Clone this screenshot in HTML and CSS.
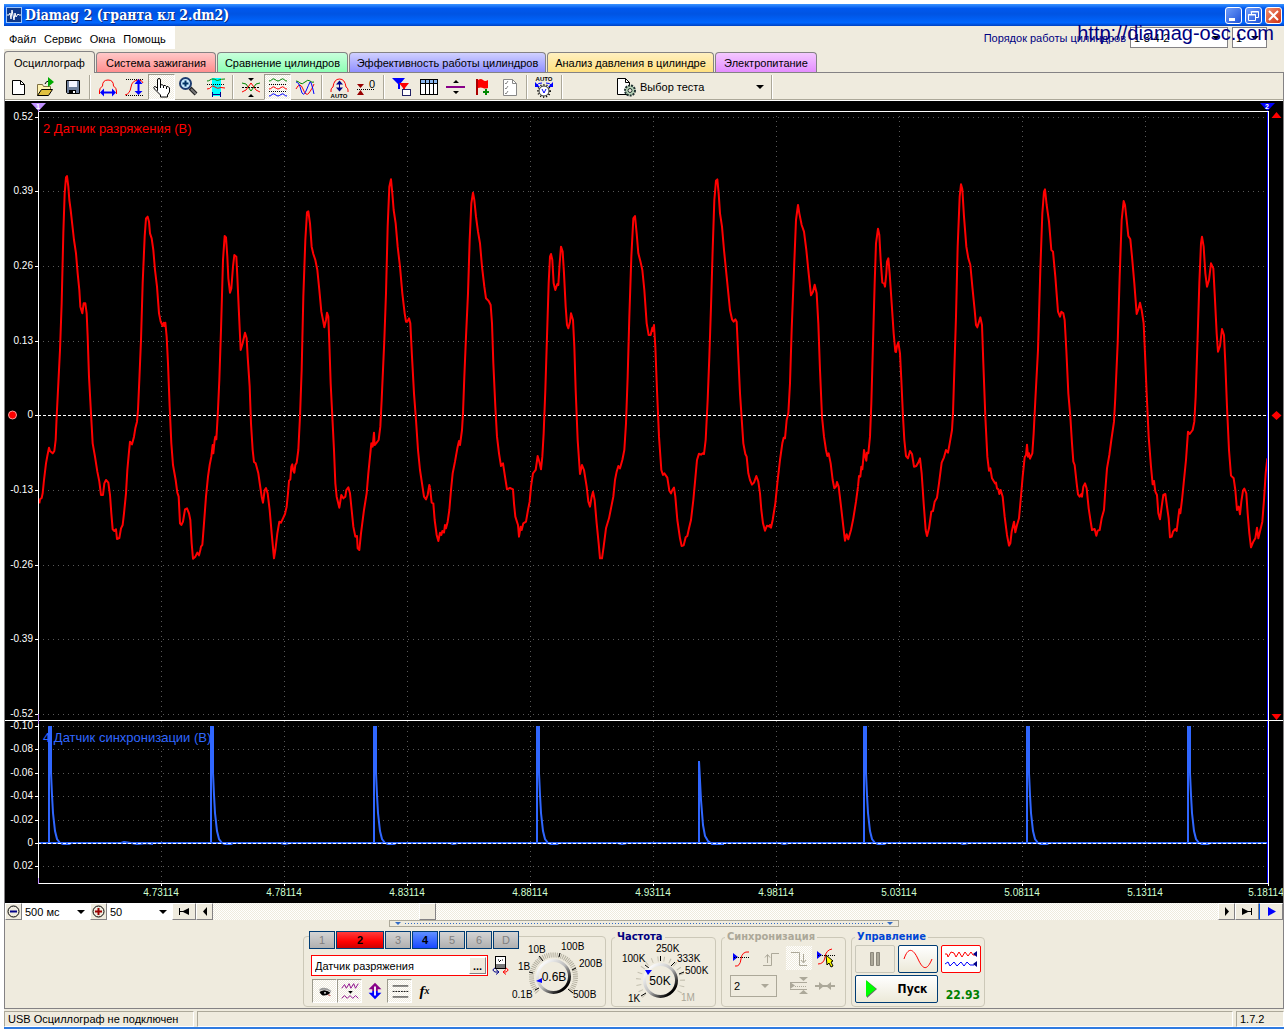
FILE: index.html
```html
<!DOCTYPE html>
<html lang="ru">
<head>
<meta charset="utf-8">
<title>Diamag 2 (гранта кл 2.dm2)</title>
<link rel="stylesheet" href="styles.css">
</head>
<body>
<div class="window">
  <header class="titlebar">
    <svg class="app-icon" width="16" height="16" viewBox="0 0 16 16"><rect x=".5" y=".5" width="15" height="15" fill="#103888" stroke="#9cc4f8"/><path d="M1 8h2l1-2 1 6 1-9 2 10 1-7 1 4 2-3 1 1h2" fill="none" stroke="#fff"/></svg>
    <h1 class="title">Diamag 2 (гранта кл 2.dm2)</h1>
    <button class="win-btn" aria-label="Свернуть"><svg width="15" height="15" viewBox="0 0 15 15"><path d="M3 10h6v3H3z" fill="#fff"/></svg></button>
    <button class="win-btn" aria-label="Восстановить"><svg width="15" height="15" viewBox="0 0 15 15"><path d="M5.500 6V3.500h7v6H10M4.500 4h8M2.500 6.500h7v6h-7zM2 7h8" fill="none" stroke="#fff"/></svg></button>
    <button class="win-btn close" aria-label="Закрыть"><svg width="15" height="15" viewBox="0 0 15 15"><path d="M3 3l9 9M12 3l-9 9" stroke="#fff" stroke-width="2"/></svg></button>
  </header>

  <div class="menurow">
    <nav class="menu">
      <button>Файл</button><button>Сервис</button><button>Окна</button><button>Помощь</button>
    </nav>
    <div class="order">
      <label for="order">Порядок работы цилиндров</label>
      <span class="combo boxed order-combo"><select id="order"><option>1-3-4-2</option></select></span>
      <span class="combo boxed cyl-combo"><select aria-label="Цилиндр"><option>1</option></select></span>
    </div>
    <a class="watermark" href="http://diamag-osc.com">http://diamag-osc.com</a>
  </div>

  <div class="tabs" role="tablist">
    <button class="tab active" role="tab">Осциллограф</button>
    <button class="tab red" role="tab">Система зажигания</button>
    <button class="tab green" role="tab">Сравнение цилиндров</button>
    <button class="tab blue" role="tab">Эффективность работы цилиндров</button>
    <button class="tab yellow" role="tab">Анализ давления в цилиндре</button>
    <button class="tab violet" role="tab">Электропитание</button>
  </div>

  <main class="page">
    <div class="toolbar">
      <button class="tool" aria-label="Новый"><svg viewBox="0 0 24 24"><path d="M5.500 5.500h8l4 4v10h-12z" fill="#fff" stroke="#000"/><path d="M13.500 5.500v4h4" fill="none" stroke="#000"/></svg></button>
      <button class="tool" aria-label="Открыть"><svg viewBox="0 0 24 24"><path d="M3.500 20.500v-11h5l1 2h7v3" fill="#fff3b0" stroke="#807040"/><path d="M3.500 20.500l4-6h11l-4 6z" fill="#e0c040" stroke="#000"/><path d="M11 9q1-3 4-3" fill="none" stroke="#000"/><path d="M14 2l6 5-6 5z" fill="#0a0"/></svg></button>
      <button class="tool" aria-label="Сохранить"><svg viewBox="0 0 24 24"><path d="M5.500 5.500h13v13h-12l-1-1z" fill="#70809c" stroke="#000"/><path d="M8 6h8v6H8z" fill="#f4f4ff"/><path d="M8 15h7v4H8z" fill="#000"/><path d="M12 16h2v2h-2z" fill="#fff"/></svg></button>
      <span class="sep"></span>
      <button class="tool" aria-label="Масштаб по времени"><svg viewBox="0 0 24 24"><path d="M3.500 19v-3q0-3 3-5 0-6 5.500-6t5.500 6q3 2 3 5v3" fill="none" stroke="red"/><path d="M6 17.500h12" stroke="#00f" stroke-width="2"/><path d="M4 17.500l4-4v8zM20 17.500l-4-4v8z" fill="#00f"/></svg></button>
      <button class="tool" aria-label="Масштаб по амплитуде"><svg viewBox="0 0 24 24"><path d="M3 4.500h17M3 20.500h17" stroke="#000" stroke-dasharray="1 1"/><path d="M2 20q5-1 6-8t8-7q3 0 4 3" fill="none" stroke="red"/><path d="M15.500 8v9" stroke="#00f" stroke-width="2"/><path d="M15.500 4l4 5h-8zM15.500 20l4-4h-8z" fill="#00f"/></svg></button>
      <button class="tool pressed" aria-label="Рука"><svg viewBox="0 0 24 24"><path d="M7.500 15.500V5q0-1.500 1.500-1.500T10.500 5v5q1.500-1 3 .5 2-.5 3 1 2-.5 3 1.500v4l-2 3v2h-7v-2l-6-6q-1.500-2 0-2.500 1.500 0 3 2z" fill="#fff" stroke="#000"/><path d="M10.500 10v3M13.500 11v2M16.500 12v2" stroke="#000"/></svg></button>
      <button class="tool" aria-label="Лупа"><svg viewBox="0 0 24 24"><path d="M13 13l6 6" stroke="#222" stroke-width="4"/><path d="M14 14l5 5" stroke="#777" stroke-width="2"/><circle cx="8.500" cy="8.500" r="5.500" fill="#c8ecff" stroke="#1c3c70" stroke-width="2"/><path d="M5.500 8.500h6M8.500 5.500v6" stroke="#036" stroke-width="2"/></svg></button>
      <button class="tool" aria-label="Выделение"><svg viewBox="0 0 24 24"><path d="M8 3h9v18H8z" fill="#0ff"/><path d="M3 6q2 0 3-1t3-1 3 1 3 0 6-1" fill="none" stroke="#080"/><path d="M3 9.500h18" stroke="#000" stroke-dasharray="1 1"/><path d="M3 14q3 0 4-2t4 0 4 1 6 0" fill="none" stroke="red"/><path d="M8 19.500h9M8.500 17v5M16.500 17v5" stroke="#008"/></svg></button>
      <span class="sep"></span>
      <button class="tool" aria-label="Совместить"><svg viewBox="0 0 24 24"><path d="M3 8l4 1 5 7 5-7 4-1" fill="none" stroke="#080"/><path d="M3 17l4-2 5-7 5 7 4 2" fill="none" stroke="red"/><path d="M3 12.500h18" stroke="#000" stroke-dasharray="2 1"/><path d="M9 3h6l-3 3zM9 22h6l-3-3z"/></svg></button>
      <button class="tool pressed" aria-label="Разнести"><svg viewBox="0 0 24 24"><g fill="none"><path d="M3 6q2 0 3-1.500t3 0 3 1.500 3-1.500 3 0 3 1.500" stroke="#080"/><path d="M3 14q2 0 3-1.500t3 0 3 1.500 3-1.500 3 0 3 1.500" stroke="red"/><path d="M3 21q2 0 3-1.500t3 0 3 1.500 3-1.500 3 0 3 1.500" stroke="#00f"/><path d="M3 9.500h18M3 16.500h18" stroke="#000" stroke-dasharray="1 1"/></g></svg></button>
      <button class="tool" aria-label="Наложить"><svg viewBox="0 0 24 24"><g fill="none"><path d="M3 6q2 0 4 2t5-1 5-1 4 1" stroke="#080"/><path d="M3 14q4-8 7 0t6 4 5-9" stroke="red"/><path d="M3 7q3 0 5 8t5 1 4-9 4 12" stroke="#00f"/></g></svg></button>
      <span class="sep"></span>
      <button class="tool" aria-label="Авто"><svg viewBox="0 0 24 24"><path d="M3 17v-2q0-2 2-3 1-8 6.500-8t6.500 8q2 1 2 3v2" fill="none" stroke="red"/><path d="M11.500 6v9" stroke="#008"/><path d="M8 9.500l3.500-4 3.500 4zM8 12.500l3.500 4 3.500-4z" fill="#008"/><text x="11" y="23" font-size="6" font-weight="bold" text-anchor="middle">AUTO</text></svg></button>
      <button class="tool" aria-label="Ноль"><svg viewBox="0 0 24 24"><path d="M2 9h7l-3.500 4zM2 20h7l-3.500-5z" fill="#900"/><path d="M2 14.500h18" stroke="#000" stroke-dasharray="1 1"/><text x="14" y="13" font-size="11">0</text></svg></button>
      <span class="sep"></span>
      <button class="tool" aria-label="Фильтр"><svg viewBox="0 0 24 24"><path d="M2 3h13l-5 6v5H8V9z" fill="#00f"/><path d="M9 8h10l-4 5v4h-2v-4z" fill="red"/><rect x="12.500" y="14.500" width="8" height="6" fill="#fff" stroke="#226"/></svg></button>
      <button class="tool" aria-label="Таблица"><svg viewBox="0 0 24 24"><rect x="3.500" y="4.500" width="17" height="15" fill="#fff" stroke="#000"/><path d="M4 5h16v3H4z" fill="#8cb8f0"/><path d="M4 8.500h16M8.500 5v14M12.500 5v14M16.500 5v14" stroke="#000"/></svg></button>
      <button class="tool" aria-label="Разделить"><svg viewBox="0 0 24 24"><path d="M2 12h19" stroke="#808" stroke-width="2"/><path d="M9 8h6l-3-3zM9 16h6l-3 3z"/></svg></button>
      <button class="tool" aria-label="Флаг"><svg viewBox="0 0 24 24"><path d="M6 4v16" stroke="#a00" stroke-width="2"/><path d="M7 5q3-2 5 0t5 0v8q-3 1-5 0t-5 0z" fill="red"/><path d="M15 14v6M12 17h6" stroke="#080" stroke-width="2"/></svg></button>
      <button class="tool" aria-label="Отчёт"><svg viewBox="0 0 24 24"><path d="M5.500 4.500h9l4 4v12h-13z" fill="#fff" stroke="#888"/><path d="M14.500 4.500v4h4M7 8l1 1 2-3M7 13l1 1 2-3M7 18l1 1 2-3" fill="none" stroke="#888"/></svg></button>
      <span class="sep"></span>
      <button class="tool" aria-label="Автонастройка"><svg viewBox="0 0 24 24"><text x="11" y="6" font-size="6" font-weight="bold" text-anchor="middle">AUTO</text><circle cx="11" cy="16" r="6" fill="none" stroke="#000" stroke-dasharray="1 2" stroke-width="2"/><circle cx="11" cy="16" r="5" fill="#fff" stroke="#333"/><path d="M9 14l2 4 2-4" fill="none" stroke="#00f"/><path d="M4 10q1-2 5-2M18 10q-1-2-5-2" fill="none" stroke="#00f"/><path d="M2 7v5h5zM20 7v5h-5z" fill="#00f"/></svg></button>
      <span class="sep"></span>
      <div class="test">
        <svg width="24" height="24" viewBox="0 0 24 24"><path d="M3.500 3.500h8l4 4v12h-12z" fill="#fff" stroke="#000"/><path d="M11.500 3.500v4h4" fill="none" stroke="#000"/><circle cx="16" cy="15.500" r="5" fill="#b8d4b8" stroke="#233" stroke-width="2" stroke-dasharray="2 1"/><circle cx="16" cy="15.500" r="2" fill="#efebde" stroke="#233"/></svg>
        <span class="combo test-combo"><select aria-label="Выбор теста"><option>Выбор теста</option></select></span>
      </div>
      <span class="sep"></span>
    </div>

    <svg class="scope" viewBox="5 101 1278 802" role="img" aria-label="Осциллограмма">
      <defs>
        <path id="pulse" d="M0 0V-116H2V-70L3-48 4-30 6-12 8-4 11 0 14 1H20L22 0H29"/>
      </defs>
      <rect x="5" y="101" width="1278" height="802"/>
      <g class="grid">
        <path d="M38 117.500H1268M38 191.500H1268M38 266.500H1268M38 341.500H1268M38 490.500H1268M38 565.500H1268M38 639.500H1268M38 714.500H1268M38 726.500H1268M38 749.500H1268M38 773.500H1268M38 796.500H1268M38 820.500H1268M38 866.500H1268"/>
        <path d="M161.500 116V883M284.500 116V883M407.500 116V883M530.500 116V883M653.500 116V883M776.500 116V883M899.500 116V883M1022.500 116V883M1145.500 116V883"/>
      </g>
      <path class="zero" d="M38 415.500H1268"/>
      <text class="name red-trace" x="43" y="133">2 Датчик разряжения (В)</text>
      <text class="name blue-trace" x="43" y="742">4 Датчик синхронизации (В)</text>

      <!-- vacuum sensor, stored at three units per pixel in three blocks -->
      <g class="vacuum">
        <polyline transform="translate(0 150) scale(.33333)" points="118,1060 120,1048 125,1044 128,1030 132,990 138,940 142,918 147,893 150,903 158,910 163,903 167,870 170,800 174,720 180,600 185,460 190,250 194,130 198,82 201,78 205,110 208,150 212,180 217,225 222,270 228,310 233,370 238,420 241,470 247,490 251,460 256,460 260,490 263,560 267,680 273,790 278,880 285,920 292,965 298,995 303,1035 309,1035 313,1000 318,990 325,998 330,1035 334,1090 338,1138 343,1143 348,1138 351,1167 358,1164 363,1135 368,1125 372,1090 378,1030 382,960 387,905 390,875 396,883 402,860 406,835 411,815 414,780 418,690 423,570 428,400 434,260 438,205 443,200 447,215 450,250 455,265 460,300 465,360 471,410 477,490 482,515 488,528 491,518 493,528 496,518 500,560 504,640 509,770 514,880 519,945 527,990 532,1028 536,1040 540,1120 544,1125 549,1115 555,1078 561,1075 567,1090 571,1110 575,1180 579,1226 586,1220 592,1208 597,1216 601,1200 603,1190 607,1185 612,1120 618,1040 624,980 629,945 634,920 638,885 640,910 644,870 646,860 649,868 653,800 658,690 663,540 669,330 674,258 678,262 682,320 685,385 690,428 694,415 699,350 703,315 709,320 712,380 716,470 722,600 728,580 735,548 740,565 743,620 749,710 753,820 758,900 762,936 767,940 775,970 780,1005 785,1040 789,1058 794,1020 798,1014 803,1030 809,1080 815,1150 822,1225 826,1200 832,1150 838,1115 843,1118 849,1105 855,1092 860,1070 864,1030 867,993 871,988 874,950 877,943 880,963 883,968 886,945 890,938 895,900 900,800 905,660 910,440 916,270 921,187 925,184 930,220 935,290 940,312 946,330 952,360 958,420 964,485 969,510 973,532 978,510 981,488 985,500 988,580 992,700 997,800 1002,900 1006,1000 1010,1040 1018,1073 1024,1035 1030,1045 1036,1040 1039,1020 1045,1012 1050,1030 1055,1080 1060,1130 1066,1160 1071,1158 1073,1195 1078,1200 1083,1150 1092,1080 1100,1030 1105,970 1110,920 1114,880 1118,890 1122,848 1124,885 1130,878 1136,870 1141,830 1145,750 1153,570 1158,430 1163,230 1168,110 1173,88 1177,130 1181,180 1187,220 1193,290 1200,350 1207,430 1214,490 1218,515 1222,515 1227,505 1231,520 1236,620 1242,730 1248,810 1254,900 1260,960 1266,1000 1272,1040 1278,1048 1283,1035 1288,1005 1290,1012"/>
        <polyline transform="translate(430 150) scale(.33333)" points="0,1012 5,1058 10,1060 14,1110 20,1155 25,1173 30,1148 34,1155 37,1143 42,1148 45,1125 48,1135 53,1115 58,1080 63,1020 68,970 75,935 82,895 87,873 90,885 96,840 99,790 103,680 108,560 114,430 119,270 124,160 129,128 133,150 138,200 144,245 150,280 156,350 163,410 168,445 176,453 182,465 186,520 190,640 196,770 201,860 207,910 213,948 219,940 225,980 231,1018 240,1014 249,1018 252,1060 256,1100 264,1125 267,1160 272,1130 275,1140 280,1120 288,1115 294,1080 299,1055 303,1010 309,970 317,960 323,918 328,935 333,958 337,920 341,850 346,720 351,560 356,400 360,320 363,312 367,330 371,400 376,420 382,402 385,405 389,340 393,290 398,305 402,370 407,470 411,525 415,535 420,515 423,490 429,510 433,590 437,720 443,870 450,972 456,945 462,960 470,1010 475,1055 480,1070 485,1040 489,1025 494,1050 500,1120 506,1180 510,1225 516,1225 521,1190 528,1135 537,1105 544,1070 550,1040 555,990 560,965 565,948 570,955 577,930 583,900 588,820 593,680 598,500 604,320 610,205 615,198 620,250 625,310 631,333 637,360 643,420 650,520 656,555 662,555 667,533 669,543 672,525 676,590 681,720 687,860 694,960 699,975 703,970 712,983 718,1022 723,1030 727,1020 732,1013 736,1040 742,1110 750,1165 755,1188 761,1186 767,1162 772,1158 777,1135 783,1110 790,1050 796,985 801,930 807,911 813,914 818,910 822,912 827,870 833,750 838,620 843,470 848,300 853,150 858,92 862,88 866,130 870,190 876,230 882,300 890,380 900,480 906,508 911,515 916,508 920,515 924,600 930,730 936,820 940,880 946,912 950,920 955,970 960,990 966,1004 972,998 979,978 985,995 990,1030 994,1080 999,1120 1005,1142 1011,1127 1018,1130 1020,1125 1023,1133 1028,1110 1036,1060 1042,1000 1050,930 1057,880 1061,863 1065,865 1070,810 1075,790 1080,700 1085,540 1092,360 1098,210 1104,165 1108,190 1115,225 1122,245 1129,300 1136,370 1143,436 1149,425 1154,404 1160,430 1165,520 1170,660 1176,800 1182,860 1188,900 1192,918 1196,910 1202,940 1208,990 1213,1015 1218,1010 1221,996 1226,1010 1232,1060 1240,1130 1245,1172 1250,1153 1255,1168 1263,1140 1270,1105 1278,1055 1284,1010"/>
        <polyline transform="translate(858 150) scale(.33333)" points="0,1010 3,978 7,980 10,950 13,958 16,925 18,900 22,920 25,932 27,908 31,910 36,860 40,760 45,580 50,400 54,280 60,236 64,255 68,330 73,398 78,400 81,410 85,370 87,335 91,325 95,370 101,460 107,550 112,605 114,606 117,588 121,577 126,610 130,690 135,800 139,870 144,918 150,925 156,903 162,912 168,950 175,948 182,935 186,925 191,970 197,1060 203,1140 207,1158 213,1135 220,1085 225,1083 230,1055 237,1043 243,1000 251,938 258,922 264,900 270,908 276,875 282,840 285,790 289,660 294,500 299,290 305,140 309,103 313,118 318,200 325,290 331,325 337,345 343,410 350,480 354,525 358,532 363,515 367,502 372,525 376,640 382,800 388,920 393,962 397,955 402,985 411,1000 414,998 417,1015 421,1018 424,1032 428,1020 434,1040 440,1100 447,1155 453,1187 457,1180 461,1145 468,1115 472,1147 477,1125 483,1105 488,1050 494,980 500,922 504,915 507,884 510,920 513,910 516,926 523,910 527,850 532,750 540,600 547,360 553,190 558,125 561,118 566,165 573,215 580,300 585,305 592,380 600,485 606,500 610,485 616,490 620,510 625,600 631,730 637,800 642,880 646,935 650,945 656,1000 660,1033 665,1040 670,1032 672,1040 676,1010 681,1000 686,1015 692,1075 698,1115 702,1140 710,1137 715,1157 719,1142 725,1140 731,1105 738,1080 742,1020 747,955 754,915 760,870 768,815 772,740 779,580 785,380 791,210 797,153 801,165 806,210 811,258 817,268 822,320 829,400 836,492 842,475 846,458 851,480 857,520 861,610 866,730 872,860 879,950 884,1003 888,993 892,1025 897,1035 901,1090 906,1108 911,1070 916,1035 922,1032 927,1070 932,1105 936,1162 941,1160 945,1145 952,1137 956,1143 960,1110 964,1078 967,1090 972,1050 977,1000 984,930 990,845 995,852 1004,840 1009,815 1013,740 1018,590 1024,400 1029,280 1032,260 1037,290 1042,370 1047,410 1053,390 1059,340 1066,355 1070,430 1076,550 1080,605 1086,588 1092,537 1098,555 1102,640 1107,770 1113,900 1119,977 1127,985 1132,1020 1137,1080 1142,1070 1146,1093 1150,1055 1155,1022 1159,1016 1165,1030 1169,1090 1174,1150 1179,1192 1185,1177 1192,1165 1197,1133 1201,1165 1207,1140 1213,1115 1218,1050 1223,970 1228,925"/>
      </g>

      <g class="sync">
        <path d="M39 843H1267M121 843l3-1 7 1 6 1 10-1 6 1M280 843l5 1 5-1M960 843l3 1 6-1M780 843l4 1 5-1M618 843l4 1 5-1M450 843l3 1 5-1"/>
        <use href="#pulse" x="49" y="843"/><use href="#pulse" x="211" y="843"/><use href="#pulse" x="374" y="843"/><use href="#pulse" x="537" y="843"/>
        <path d="M699 843V761L701 800 703 825 705 836 708 841 712 844H724"/>
        <use href="#pulse" x="864" y="843"/><use href="#pulse" x="1027" y="843"/><use href="#pulse" x="1188" y="843"/>
      </g>
      <path class="zero" d="M38 843.500H1268"/>

      <path d="M1267.500 111V883" stroke="#00f"/>
      <path class="frame" d="M38 111.500H1268M38.500 105V883M38 883.500H1269M1268.500 111V883M5 720.500H1283"/>
      <path class="frame" d="M35 117.500h4M35 191.500h4M35 266.500h4M35 341.500h4M35 415.500h4M35 490.500h4M35 565.500h4M35 639.500h4M35 714.500h4M35 726.500h4M35 749.500h4M35 773.500h4M35 796.500h4M35 820.500h4M35 843.500h4M35 866.500h4M161.500 883v3M284.500 883v3M407.500 883v3M530.500 883v3M653.500 883v3M776.500 883v3M899.500 883v3M1022.500 883v3M1145.500 883v3M1268.500 883v3"/>
      <path d="M38.500 103v9M38.500 714v10M38.500 878v6" stroke="#c090ff"/>
      <path d="M31 103H46L38.500 111z" fill="#c090ff"/><text x="38" y="109" font-size="7" font-weight="bold" fill="#fff" text-anchor="middle">1</text>
      <path d="M1260 103H1275L1267.500 111z" fill="#00f"/><text x="1267" y="109" font-size="7" font-weight="bold" fill="#fff" text-anchor="middle">2</text>
      <path d="M1276.500 112l5 6h-10zM1276.500 720l5-6h-10zM1276.500 411l5 4.500-5 4.500-5-4.500z" fill="red"/>
      <circle cx="12.500" cy="415" r="4" fill="red" stroke="#f99"/>

      <g class="axis" text-anchor="end">
        <text x="33" y="120">0.52</text><text x="33" y="194">0.39</text><text x="33" y="269">0.26</text><text x="33" y="344">0.13</text><text x="33" y="418">0</text><text x="33" y="493">-0.13</text><text x="33" y="568">-0.26</text><text x="33" y="642">-0.39</text><text x="33" y="717">-0.52</text>
        <text x="33" y="729">-0.10</text><text x="33" y="752">-0.08</text><text x="33" y="776">-0.06</text><text x="33" y="799">-0.04</text><text x="33" y="823">-0.02</text><text x="33" y="846">0</text><text x="33" y="869">0.02</text>
      </g>
      <g class="axis time" text-anchor="middle">
        <text x="161" y="896">4.73114</text><text x="284" y="896">4.78114</text><text x="407" y="896">4.83114</text><text x="530" y="896">4.88114</text><text x="653" y="896">4.93114</text><text x="776" y="896">4.98114</text><text x="899" y="896">5.03114</text><text x="1022" y="896">5.08114</text><text x="1145" y="896">5.13114</text><text x="1266" y="896">5.18114</text>
      </g>
    </svg>

    <div class="navbar">
      <button class="bevel" aria-label="Сжать"><svg width="13" height="13" viewBox="0 0 13 13"><circle cx="6.500" cy="6.500" r="5.500" fill="#efebde" stroke="#000"/><path d="M3 6.500h7" stroke="#008" stroke-width="2"/></svg></button>
      <span class="combo span-combo"><select aria-label="Развёртка"><option>500 мс</option></select></span>
      <button class="bevel" aria-label="Растянуть"><svg width="13" height="13" viewBox="0 0 13 13"><circle cx="6.500" cy="6.500" r="5.500" fill="#efebde" stroke="#000"/><path d="M3 6.500h7M6.500 3v7" stroke="#900" stroke-width="2"/></svg></button>
      <span class="combo zoom-combo"><select aria-label="Масштаб"><option>50</option></select></span>
      <button class="bevel wide" aria-label="В начало"><svg width="12" height="9" viewBox="0 0 12 9"><path d="M1 1h1v7H1zM11 1v7L5 5H2V4h3z"/></svg></button>
      <button class="bevel" aria-label="Назад"><svg width="6" height="9" viewBox="0 0 6 9"><path d="M5 0v9L1 4.500z"/></svg></button>
      <input class="scroll" type="range" min="0" max="1000" value="208" aria-label="Прокрутка">
      <button class="bevel" aria-label="Вперёд"><svg width="6" height="9" viewBox="0 0 6 9"><path d="M1 0v9l4-4.500z"/></svg></button>
      <button class="bevel wide" aria-label="В конец"><svg width="12" height="9" viewBox="0 0 12 9"><path d="M10 1h1v7h-1zM1 1v7l6-3h3V4H7z"/></svg></button>
      <button class="bevel wide play" aria-label="Воспроизвести"><svg width="9" height="9" viewBox="0 0 9 9"><path d="M1 0v9l8-4.500z" fill="#00f"/></svg></button>
    </div>

    <div class="splitter"><i></i><span></span><i></i></div>

    <div class="panel">
      <section class="channel">
        <div class="channels">
          <button>1</button><button class="on">2</button><button>3</button><button class="sync-ch">4</button><button>5</button><button>6</button><button>D</button>
        </div>
        <div class="sensor">
          <div class="sensor-name">
            <input type="text" value="Датчик разряжения" aria-label="Название датчика">
            <button class="bevel more">...</button>
          </div>
          <button class="flat" aria-label="Инвертировать"><svg width="18" height="20" viewBox="0 0 18 20"><rect x="3.500" y="1.500" width="10" height="12" fill="#fff" stroke="#000"/><path d="M4 9h9v4H4z" fill="#777"/><path d="M6 5h1M10 5h1M7 7l2-2" stroke="#000"/><path d="M3 13q-4 2 0 4h3M4 14.500l3 2.500-3 2.500" fill="none" stroke="#008"/><path d="M14 13q4 2 0 4h-2M14 14.500l-3 2.500 3 2.500" fill="none" stroke="red"/></svg></button>
        </div>
        <div class="mini">
          <button class="tool pressed" aria-label="Показать"><svg viewBox="0 0 24 24"><path d="M6 10q6-4 13 2l-1 1q-6-4-12-1z" fill="#999"/><path d="M6 13q6-4 12 1-3 3-7 3-3 0-5-4z" fill="#000"/><circle cx="12" cy="14" r="1" fill="#fff"/><path d="M15 16l3 1" stroke="#a33"/></svg></button>
          <button class="tool pressed" aria-label="Сигнал"><svg viewBox="0 0 24 24"><path d="M3 9l3-4 2 4 3-5 2 5 3-5 2 5 3-5M3 20l3-3 3 3 3-3 3 3 3-3 3 3" fill="none" stroke="#808"/><path d="M10 12h5l-2.500 3z"/></svg></button>
          <button class="tool" aria-label="Смещение"><svg viewBox="0 0 24 24"><path d="M12 3l7 7h-4v2H9v-2H5z" fill="#808"/><path d="M12 21l7-7h-4v-2H9v2H5z" fill="#00f"/><path d="M12 7v10" stroke="#fff" stroke-width="2"/></svg></button>
          <button class="tool pressed" aria-label="Линии"><svg viewBox="0 0 24 24"><path d="M4 6.500h17M4 18.500h17" stroke="#000"/><path d="M4 12.500h17" stroke="#000" stroke-dasharray="2 1"/></svg></button>
          <button class="tool fx" aria-label="Функция">f<sub>x</sub></button>
        </div>
        <svg class="dial" width="92" height="68" viewBox="515 939 92 68">
          <defs><linearGradient id="knob" x1="0" y1="0" x2="1" y2="1"><stop offset=".1" stop-color="#fff"/><stop offset=".5" stop-color="#bbb"/><stop offset=".85" stop-color="#000"/></linearGradient></defs>
          <path d="M541.500 996A22 22 0 1 1 573.500 996" fill="none" stroke="#b4b0a0" stroke-width="5" stroke-dasharray="1 1"/>
          <path d="M539 994l4-2M533 976l4 1M543 960l4 5M564 957l-1 4M580 972l-4 2M572 993l5 4" stroke="#000" stroke-width="1"/>
          <circle cx="557.500" cy="980.500" r="16" fill="#efebde" stroke="url(#knob)" stroke-width="3"/>
          <path d="M540 985l6-3v5z" fill="#00f"/>
          <g class="dial-text"><text x="516" y="1002">0.1В</text><text x="522" y="974">1В</text><text x="532" y="957">10В</text><text x="565" y="954">100В</text><text x="583" y="971">200В</text><text x="577" y="1002">500В</text></g>
          <text class="dial-value" x="558" y="985">0.6В</text>
        </svg>
      </section>

      <fieldset class="group rate">
        <legend>Частота</legend>
        <svg width="98" height="62" viewBox="616 944 98 62">
          <path d="M645.500 996A22 22 0 1 1 677.500 996" fill="none" stroke="#c4c0b0" stroke-width="5" stroke-dasharray="1 5"/>
          <path d="M642 996l5-3M646 965l4 3M661.500 956v5M676 962l-4 4M685 972l-5 2" stroke="#000"/>
          <circle cx="661.500" cy="980.500" r="16" fill="#efebde" stroke="url(#knob)" stroke-width="3"/>
          <path d="M646 970h7l-4 5z" fill="#00f"/>
          <g class="dial-text"><text x="629" y="1002">1K</text><text x="623" y="962">100K</text><text x="657" y="952">250K</text><text x="678" y="962">333K</text><text x="686" y="974">500K</text><text x="682" y="1001" fill="#aaa698">1M</text></g>
          <text class="dial-value" x="661" y="985">50K</text>
        </svg>
      </fieldset>

      <fieldset class="group trig">
        <legend>Синхронизация</legend>
        <div class="trig-row">
          <button class="tool" aria-label="Уровень"><svg viewBox="0 0 24 24"><path d="M2 7v8l5-4z" fill="#00f"/><path d="M3 11.500h16" stroke="#000" stroke-dasharray="1 1"/><path d="M4 20q5 1 6-7t8-7" fill="none" stroke="red"/></svg></button>
          <button class="tool" aria-label="Фронт"><svg viewBox="0 0 24 24"><path d="M4 19.500h8.500V7.500H20M8.500 17V9M6 11.500l2.500-3 2.500 3" fill="none" stroke="#aca899"/></svg></button>
          <button class="tool dither" aria-label="Спад"><svg viewBox="0 0 24 24"><path d="M4 6.500h8.500v13H20M16.500 8v8M14 14l2.500 3 2.500-3" fill="none" stroke="#aca899"/></svg></button>
          <button class="tool" aria-label="Захват"><svg viewBox="0 0 24 24"><path d="M2 5v8l5-4z" fill="#00f"/><path d="M3 9.500h17" stroke="#000" stroke-dasharray="1 1"/><path d="M3 18q6 0 7-7t7-8" fill="none" stroke="red"/><path d="M11 9l7 6-2 1 2 4-2 1-2-4-2 2z" fill="#ff0" stroke="#000"/></svg></button>
        </div>
        <div class="trig-row">
          <span class="combo trig-combo"><select aria-label="Канал синхронизации" disabled><option>2</option></select></span>
          <svg class="trig-icon" viewBox="0 0 24 24"><path d="M3 8v7l5-3.500zM12 3h9l-4.500 4zM12 20h9l-4.500-4z" fill="#aca899"/><path d="M3 8.500h17M3 15.500h17" stroke="#aca899"/><path d="M8 12.500h12" stroke="#aca899" stroke-dasharray="1 1"/></svg>
          <svg class="trig-icon" viewBox="0 0 24 24"><path d="M2 12h20" stroke="#aca899" stroke-width="2"/><path d="M6 8v8l5-4zM18 8v8l-5-4z" fill="#aca899"/></svg>
        </div>
      </fieldset>

      <fieldset class="group control">
        <legend>Управление</legend>
        <div class="control-grid">
          <button class="xp off" disabled aria-label="Пауза"><svg width="13" height="16" viewBox="0 0 13 16"><path d="M1.500 1.500h3v13h-3zM7.500 1.500h3v13h-3z" fill="#aca899" stroke="#8c887c"/></svg></button>
          <button class="xp" aria-label="Однократно"><svg width="30" height="20" viewBox="0 0 30 20"><path d="M1 10C5-2 10-1 15 10s9 12 14 0" fill="none" stroke="red"/></svg></button>
          <button class="xp cyclic" aria-label="Непрерывно"><svg width="34" height="20" viewBox="0 0 34 20"><path d="M1 5h2l1 3 3-5 3 1 2 4 3-5 3 5 3-5 3 4 3-4 2 3h2" fill="none" stroke="red"/><path d="M1 15l3-2 2 4 4-4 3 4 4-4 3 4 3-4 3 3h4" fill="none" stroke="#00f"/><path d="M33 2v6l-4-3zM33 12v6l-4-3z" fill="#008"/></svg></button>
          <button class="xp start"><svg width="12" height="18" viewBox="0 0 12 18"><path d="M1 1v17L11 9z" fill="#666"/><path d="M0 0v17L10 9z" fill="#0f0"/></svg><span>Пуск</span></button>
          <output class="elapsed">22.93</output>
        </div>
      </fieldset>
    </div>
  </main>

  <footer class="status">
    <span class="cell device">USB Осциллограф не подключен</span>
    <span class="cell info"></span>
    <span class="cell version">1.7.2</span>
  </footer>
</div>
</body>
</html>
```
FILE: styles.css
```css
* { box-sizing: border-box; }

body {
  margin: 0;
  background: #fff;
  color: #000;
  font: 11px/14px "Liberation Sans", sans-serif;
}

button, select, input {
  margin: 0;
  padding: 0;
  border: 0;
  border-radius: 0;
  background: none;
  color: inherit;
  font: inherit;
}

button { display: inline-flex; align-items: center; justify-content: center; white-space: nowrap; }

.window {
  margin: 4px;
  background: #efebde;
  border-bottom: 2px solid #2f7be0;
}

/* title bar */
.titlebar {
  display: flex;
  align-items: center;
  gap: 3px;
  height: 22px;
  padding: 0 2px;
  background: linear-gradient(#3a93ff, #0058ee 20%, #0054e3 45%, #0066ff 85%, #0040c0);
}
.title {
  flex: 1;
  margin: 0;
  color: #fff;
  font: bold 14px/20px "DejaVu Serif Condensed", "DejaVu Serif", serif;
  text-shadow: 1px 1px #0b2a80;
}
.win-btn {
  width: 17px;
  height: 17px;
  border: 1px solid #fff;
  border-radius: 3px;
  background: linear-gradient(135deg, #6f9dfa, #1f52d8);
}
.win-btn.close { background: linear-gradient(135deg, #f09070, #d03010); }

/* menu */
.menurow {
  position: relative;
  display: flex;
  justify-content: space-between;
  align-items: flex-start;
  height: 25px;
}
.menu {
  display: flex;
  gap: 8px;
  height: 23px;
  padding: 2px 9px 0 5px;
  background: #fff;
}
.order { display: flex; align-items: center; gap: 4px; padding: 1px 17px 0 0; color: #000080; }
.watermark {
  position: absolute;
  right: 10px;
  top: -5px;
  color: #000080;
  font: 20px/24px "Liberation Sans", sans-serif;
  text-decoration: none;
}

/* drop-down lists */
.combo { display: grid; align-items: center; background: #fff; color: #000; }
.combo select, .combo::after { grid-area: 1 / 1; }
.combo select { appearance: none; width: 100%; height: 100%; padding: 0 3px; opacity: 1; }
.combo::after {
  content: "";
  justify-self: end;
  margin-right: 7px;
  border: 4px solid transparent;
  border-top-color: currentColor;
  border-bottom: 0;
  pointer-events: none;
}
.boxed { height: 21px; border: 1px solid #848284; }
.order-combo { width: 98px; }
.cyl-combo { width: 35px; }

/* tabs */
.tabs { display: flex; align-items: flex-end; gap: 1px; height: 21px; }
.tab {
  height: 20px;
  padding: 0;
  border: 1px solid #848284;
  border-bottom: 0;
  border-radius: 4px 4px 0 0;
}
.tab.active { width: 91px; height: 22px; margin-bottom: -1px; background: #efebde; position: relative; }
.tab.red { width: 120px; background: linear-gradient(#ffc8c8, #ff8e8e); }
.tab.green { width: 131px; background: linear-gradient(#c8ffdc, #8effb4); }
.tab.blue { width: 197px; background: linear-gradient(#d0d0ff, #9090ff); }
.tab.yellow { width: 167px; background: linear-gradient(#fff0c0, #ffe080); }
.tab.violet { width: 102px; background: linear-gradient(#f4c8ff, #e48eff); }

.page { border: 1px solid #848284; }

/* toolbar */
.toolbar {
  display: flex;
  align-items: center;
  height: 28px;
  border-bottom: 1px solid #fff;
  box-shadow: inset 0 -1px #aca899;
}
.tool { width: 27px; height: 26px; }
.tool svg { flex: none; width: 24px; height: 24px; }
.pressed, .dither {
  background: repeating-conic-gradient(#fff 0 25%, #efebde 0 50%) 0 0 / 2px 2px;
}
.pressed { border: 1px solid; border-color: #9c9a8c #fff #fff #9c9a8c; }
.sep {
  width: 8px;
  height: 24px;
  background: linear-gradient(90deg, transparent 3px, #aca899 3px 4px, #fff 4px 5px, transparent 5px);
}
.test { display: flex; align-items: center; width: 202px; padding-left: 48px; }
.test-combo { flex: 1; background: none; }
.test-combo select { padding: 0 2px; }
.test-combo::after { margin-right: 4px; }

/* oscilloscope screen */
.scope { display: block; width: 100%; height: auto; }
.grid { fill: none; stroke: #585858; stroke-dasharray: 1 4; }
.zero { fill: none; stroke: #fff; stroke-dasharray: 3 2; }
.frame { fill: none; stroke: #fff; }
.name { font-size: 13px; }
.red-trace { fill: #f00; }
.blue-trace { fill: #3067ff; }
.vacuum { fill: none; stroke: #f00; stroke-width: 6; stroke-linejoin: round; }
.sync { fill: none; stroke: #3067ff; stroke-width: 2; }
.axis { fill: #fff; font-size: 10px; }
.time { fill: #d0ffd0; }

/* time navigation */
.navbar { display: flex; height: 17px; }
.bevel {
  width: 17px;
  border: 1px solid;
  border-color: #fff #848284 #848284 #fff;
  background: #efebde;
}
.bevel.wide { width: 24px; }
.bevel.play { border-left-color: #0058ee; }
.span-combo { width: 68px; }
.zoom-combo { width: 65px; }
.span-combo::after, .zoom-combo::after { margin-right: 5px; }
.scroll {
  appearance: none;
  flex: 1;
  min-width: 0;
  height: 17px;
  background: repeating-conic-gradient(#fff 0 25%, #efebde 0 50%) 0 0 / 2px 2px;
}
.scroll::-webkit-slider-thumb {
  appearance: none;
  width: 17px;
  height: 17px;
  border: 1px solid;
  border-color: #fff #848284 #848284 #fff;
  background: #efebde;
}

.splitter {
  display: flex;
  align-items: center;
  gap: 4px;
  width: 510px;
  height: 7px;
  margin: 0 auto;
  padding: 0 5px;
  border: 1px solid #aca899;
}
.splitter i { border: 3px solid transparent; border-top-color: #316ac5; border-bottom: 0; }
.splitter span { flex: 1; height: 1px; background: repeating-linear-gradient(90deg, #316ac5 0 1px, transparent 1px 3px); }

/* control panel */
.panel { display: flex; justify-content: center; gap: 5px; padding: 3px 0 1px; }
.channel {
  display: grid;
  grid-template: 18px 24px 24px / 207px 92px;
  width: 303px;
  height: 71px;
  margin-top: 6px;
  border: 1px solid #ccc8b8;
  border-radius: 4px;
}
.channels { display: flex; gap: 1px; grid-area: 1 / 1 / 2 / 3; justify-self: start; margin: -6px 0 6px 5px; background: #efebde; }
.channels button {
  width: 26px;
  height: 18px;
  border: 1px solid #003c74;
  background: linear-gradient(#d4d4d4, #b0b0b0);
  color: #808080;
}
.channels .on { width: 48px; background: linear-gradient(#ff3c3c, #f00 60%, #c00); color: #000; font-weight: bold; }
.channels .sync-ch { background: linear-gradient(#6090ff, #1848ff); color: #000; font-weight: bold; }
.sensor { display: flex; grid-area: 2 / 1; align-items: flex-start; gap: 4px; padding-left: 7px; }
.sensor-name { display: flex; width: 177px; height: 21px; padding: 1px; border: 1px solid #f00; background: #fff; }
.sensor-name input { flex: 1; min-width: 0; padding: 0 2px; }
.more { font-weight: bold; line-height: 8px; }
.mini { display: flex; grid-area: 3 / 1; padding-left: 8px; }
.mini .tool { width: 25px; height: 24px; }
.mini .tool svg { width: 22px; height: 22px; }
.mini .fx { font: italic bold 15px/18px "Liberation Serif", serif; }
.fx sub { font-size: 10px; line-height: 8px; }
.dial { grid-area: 1 / 2 / 4 / 3; align-self: end; }
.dial-text { font: 10px "Liberation Sans", sans-serif; }
.dial-value { font: 12px "Liberation Sans", sans-serif; text-anchor: middle; }

.group {
  min-width: 0;
  height: 77px;
  margin: 0;
  padding: 0 3px;
  border: 1px solid #ccc8b8;
  border-radius: 4px;
}
.group legend { height: 14px; padding: 0 2px; font: bold 11px/14px "DejaVu Sans Condensed", sans-serif; }
.rate { width: 105px; }
.rate legend { color: #000080; }
.rate svg { display: block; }
.trig { width: 125px; }
.trig legend { color: #aca899; }
.trig-row { display: flex; align-items: center; gap: 2px; height: 28px; padding-left: 5px; }
.trig-row .tool { width: 26px; height: 24px; }
.trig-combo { width: 47px; height: 22px; margin-right: 8px; border: 1px solid #aca899; background: none; }
.trig-combo::after { color: #aca899; }
.trig-icon { width: 24px; height: 24px; }
.control { width: 134px; }
.control legend { color: #0046d5; }
.control-grid { display: grid; grid-template: 28px 28px / 40px 40px 40px; gap: 2px 3px; padding-top: 1px; }
.xp { border: 1px solid #003c74; border-radius: 2px; background: linear-gradient(#fff, #ece9d8); }
.xp.off { border-color: #c9c7ba; background: #efebde; }
.xp.cyclic { border-color: #f00; background: #fff; }
.start { grid-column: 1 / 3; gap: 20px; font: bold 12px/14px "DejaVu Sans Condensed", sans-serif; }
.elapsed { align-self: center; justify-self: end; padding: 12px 1px 0 0; color: #008000; font: bold 12px/14px "DejaVu Sans Condensed", sans-serif; }

/* status bar */
.status { display: flex; gap: 3px; padding-top: 2px; }
.cell { height: 16px; padding-left: 3px; border: 1px solid; border-color: #aca899 #fff #fff #aca899; }
.device { width: 190px; }
.info { flex: 1; }
.version { width: 48px; }
```
